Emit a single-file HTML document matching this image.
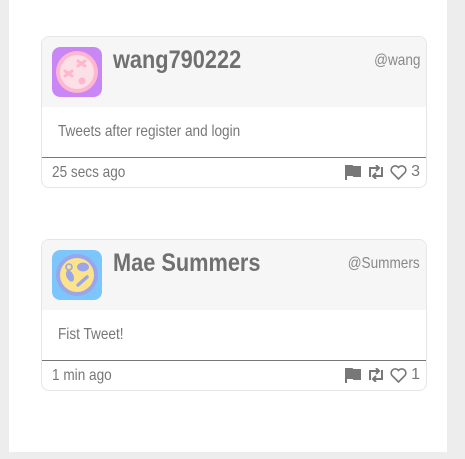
<!DOCTYPE html>
<html><head><style>
body{margin:0;width:465px;height:459px;background:#ededed;font-family:"Liberation Sans",sans-serif;overflow:hidden;position:relative}
.panel{position:absolute;left:9px;top:0;width:438px;height:452px;background:#fff}
.card{position:absolute;left:41px;width:384px;border:1px solid #e6e6e6;border-radius:8px;background:#fff;overflow:hidden}
.hd{height:70px;background:#f6f6f6;position:relative}
.av{position:absolute;left:10px;top:10px;width:50px;height:50px;border-radius:8px}
.nm{position:absolute;left:71px;top:9px;font-size:25px;font-weight:bold;color:#707070;transform:scaleX(.87);transform-origin:left;white-space:nowrap}
.at{position:absolute;right:6px;top:15px;font-size:16px;color:#888;transform:scaleX(.85);transform-origin:right}
.bd{height:50px;position:relative;border-bottom:1px solid #777}
.bd span{position:absolute;left:16px;top:16px;font-size:16px;color:#777;transform:scaleX(.85);transform-origin:left;white-space:nowrap}
.ft{height:29px;position:relative}
.ft .t{position:absolute;left:10px;top:6px;font-size:16px;color:#777;transform:scaleX(.85);transform-origin:left;white-space:nowrap}
.ic{position:absolute;right:6px;top:5px;display:flex;align-items:center;gap:4px;color:#777;font-size:16px}
</style></head><body>
<div class="panel"></div>
<div class="card" style="top:36px">
 <div class="hd">
  <svg class="av" viewBox="0 0 50 50"><rect width="50" height="50" rx="8" fill="#c887f5"/><circle cx="25" cy="25" r="21" fill="#ffb6cf"/><circle cx="25" cy="25" r="17" fill="#fde0e6"/><g stroke="#ffb6cf" stroke-width="3" stroke-linecap="round"><path d="M13 24l7 5M20 24l-7 5M26 14l7 5M33 14l-7 5"/></g><circle cx="30" cy="34" r="3.5" fill="#ffb6cf"/></svg>
  <div class="nm">wang790222</div><div class="at">@wang</div>
 </div>
 <div class="bd"><span>Tweets after register and login</span></div>
 <div class="ft"><span class="t">25 secs ago</span>
  <div class="ic"><svg width="18" height="16" viewBox="0 0 18 16"><path d="M2 1v15M2 2h6l1 1h7v9h-6l-1-1H2" fill="#777" stroke="#777" stroke-width="2"/></svg><svg width="20" height="14" viewBox="0 0 20 14"><path d="M4 12V3h9M10 0l3 3-3 3M16 2v9H7M10 14l-3-3 3-3" fill="none" stroke="#777" stroke-width="2"/></svg><svg width="17" height="15" viewBox="0 0 17 15"><path d="M8.5 14L2 7.5A3.7 3.7 0 0 1 8.5 2.5 3.7 3.7 0 0 1 15 7.5z" fill="none" stroke="#777" stroke-width="1.6"/></svg><span>3</span></div></div>
</div>
<div class="card" style="top:239px">
 <div class="hd">
  <svg class="av" viewBox="0 0 50 50"><rect width="50" height="50" rx="8" fill="#7cc6fd"/><circle cx="25" cy="25" r="21" fill="#9ba5ea"/><circle cx="25" cy="25" r="17" fill="#fde38a"/><ellipse cx="31" cy="17" rx="6" ry="4.5" fill="#9ba5ea"/><ellipse cx="18" cy="26" rx="3.5" ry="6" fill="#9ba5ea" transform="rotate(-25 18 26)"/><path d="M26 35l9-8" stroke="#9ba5ea" stroke-width="3.5" stroke-linecap="round"/><circle cx="17" cy="17" r="3" fill="none" stroke="#9ba5ea" stroke-width="1.6"/></svg>
  <div class="nm">Mae Summers</div><div class="at">@Summers</div>
 </div>
 <div class="bd"><span>Fist Tweet!</span></div>
 <div class="ft"><span class="t">1 min ago</span>
  <div class="ic"><svg width="18" height="16" viewBox="0 0 18 16"><path d="M2 1v15M2 2h6l1 1h7v9h-6l-1-1H2" fill="#777" stroke="#777" stroke-width="2"/></svg><svg width="20" height="14" viewBox="0 0 20 14"><path d="M4 12V3h9M10 0l3 3-3 3M16 2v9H7M10 14l-3-3 3-3" fill="none" stroke="#777" stroke-width="2"/></svg><svg width="17" height="15" viewBox="0 0 17 15"><path d="M8.5 14L2 7.5A3.7 3.7 0 0 1 8.5 2.5 3.7 3.7 0 0 1 15 7.5z" fill="none" stroke="#777" stroke-width="1.6"/></svg><span>1</span></div></div>
</div>
</body></html>
